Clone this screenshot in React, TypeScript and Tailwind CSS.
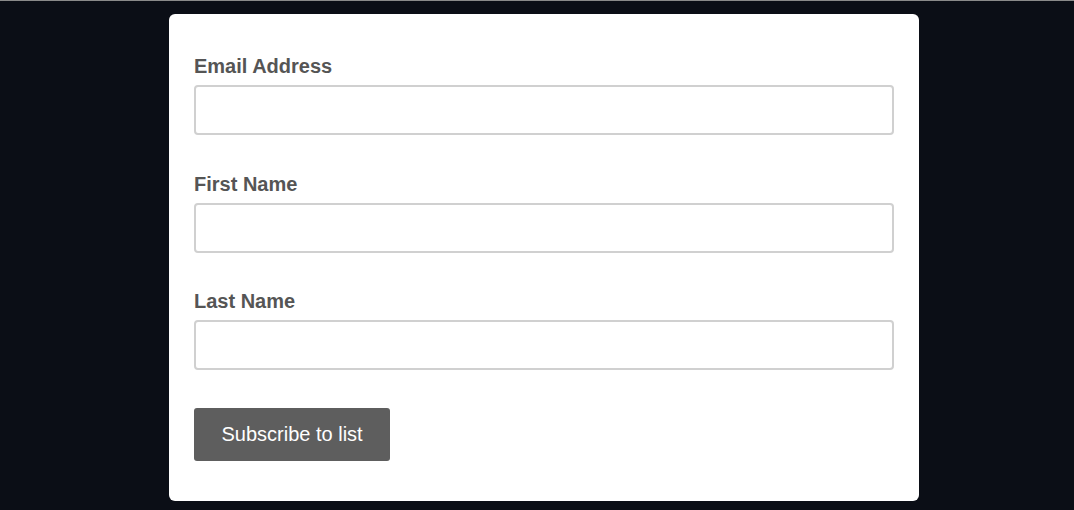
import React from "react";

function Field({ label }: { label: string }) {
  return (
    <div className="mb-[37.5px]">
      <label className="block text-[20px] leading-[23px] font-bold text-[#555555] mb-[7px]">
        {label}
      </label>
      <input
        type="text"
        className="block w-full h-[50px] border-2 border-[#d0d0d0] rounded-[4px] bg-white outline-none px-3"
      />
    </div>
  );
}

export default function App() {
  return (
    <div
      className="w-[1074px] h-[510px] bg-[#0b0e16] border-t border-[#8a8a8a] overflow-hidden"
      style={{ fontFamily: '"Liberation Sans", Arial, sans-serif' }}
    >
      <div className="ml-[169px] mt-[13px] w-[750px] bg-white rounded-[6px] px-[25px] pt-[41px] pb-[40px]">
        <Field label="Email Address" />
        <Field label="First Name" />
        <Field label="Last Name" />
        <button className="block bg-[#5e5e5e] text-white text-[20px] leading-[23px] px-[27.5px] py-[15px] rounded-[3px]">
          Subscribe to list
        </button>
      </div>
    </div>
  );
}
